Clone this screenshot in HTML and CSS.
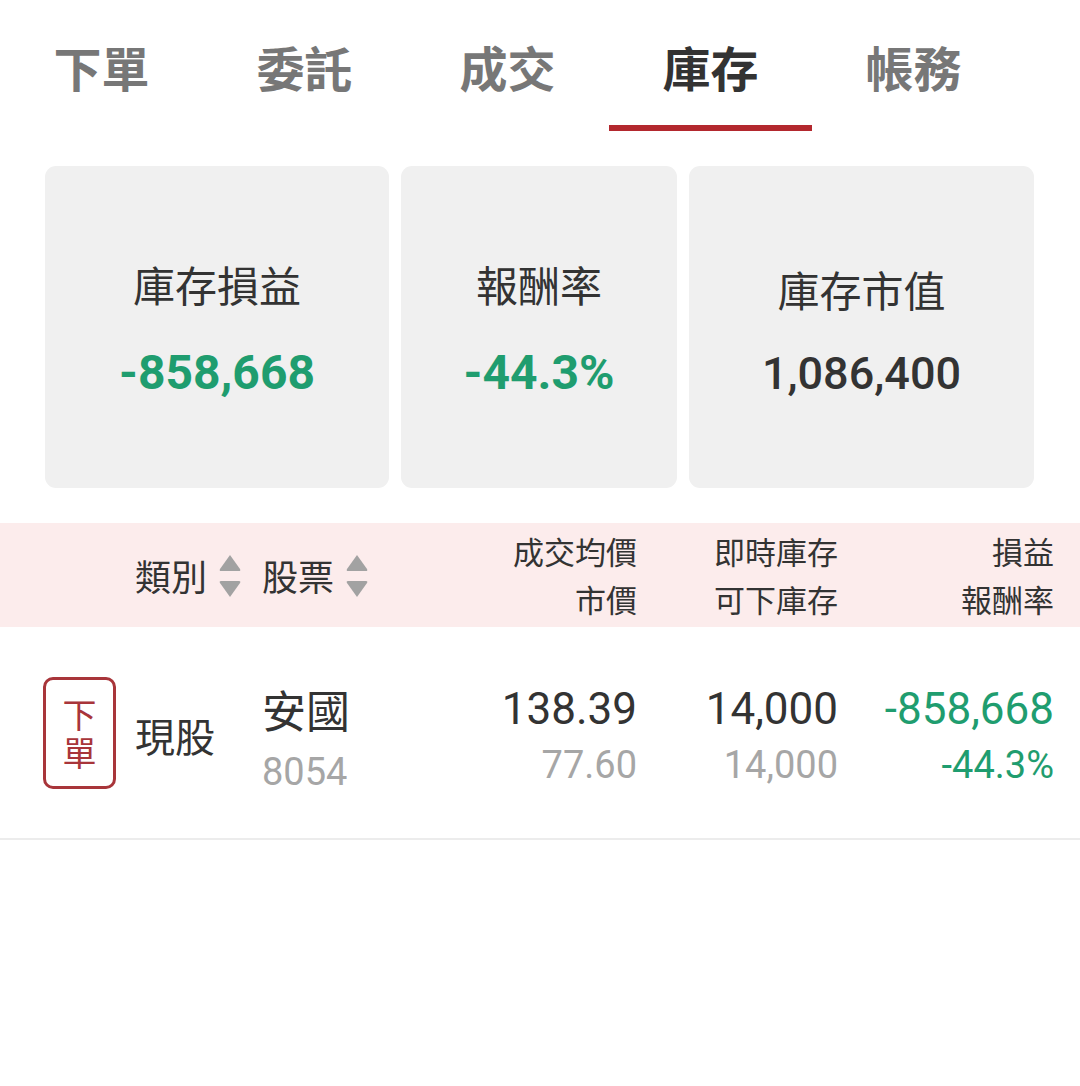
FILE: index.html
```html
<!DOCTYPE html>
<html lang="zh-Hant">
<head>
<meta charset="utf-8">
<title>庫存</title>
<link rel="stylesheet" href="styles.css">
</head>
<body>
<nav class="tabs">
  <div class="tab">下單</div>
  <div class="tab">委託</div>
  <div class="tab">成交</div>
  <div class="tab tab--active">庫存</div>
  <div class="tab">帳務</div>
</nav>

<section class="cards">
  <div class="card">
    <div class="card-label">庫存損益</div>
    <div class="card-value card-value--down">-858,668</div>
  </div>
  <div class="card">
    <div class="card-label">報酬率</div>
    <div class="card-value card-value--down">-44.3%</div>
  </div>
  <div class="card card--plain">
    <div class="card-label">庫存市值</div>
    <div class="card-value">1,086,400</div>
  </div>
</section>

<section class="table">
  <div class="thead">
    <div class="th th--empty"></div>
    <div class="th th--sort">
      <span class="sort-label">類別</span>
      <svg class="sort-icon" viewBox="0 0 24 46" width="24" height="46" aria-hidden="true">
        <path d="M12 2 L22 16 Q23 18 21 18 L3 18 Q1 18 2 16 Z" fill="#a2a2a2"/>
        <path d="M12 44 L22 30 Q23 28 21 28 L3 28 Q1 28 2 30 Z" fill="#a2a2a2"/>
      </svg>
    </div>
    <div class="th th--sort">
      <span class="sort-label">股票</span>
      <svg class="sort-icon" viewBox="0 0 24 46" width="24" height="46" aria-hidden="true">
        <path d="M12 2 L22 16 Q23 18 21 18 L3 18 Q1 18 2 16 Z" fill="#a2a2a2"/>
        <path d="M12 44 L22 30 Q23 28 21 28 L3 28 Q1 28 2 30 Z" fill="#a2a2a2"/>
      </svg>
    </div>
    <div class="th th--num"><div>成交均價</div><div>市價</div></div>
    <div class="th th--num"><div>即時庫存</div><div>可下庫存</div></div>
    <div class="th th--num"><div>損益</div><div>報酬率</div></div>
  </div>

  <div class="row">
    <div class="cell cell--badge">
      <div class="badge"><span class="badge-text">下單</span></div>
    </div>
    <div class="cell cell--type">現股</div>
    <div class="cell cell--stock">
      <div class="stock-name">安國</div>
      <div class="stock-code">8054</div>
    </div>
    <div class="cell cell--num">
      <div class="num-main">138.39</div>
      <div class="num-sub">77.60</div>
    </div>
    <div class="cell cell--num">
      <div class="num-main">14,000</div>
      <div class="num-sub">14,000</div>
    </div>
    <div class="cell cell--num cell--down">
      <div class="num-main">-858,668</div>
      <div class="num-sub">-44.3%</div>
    </div>
  </div>
</section>
</body>
</html>
```

FILE: styles.css
```css
* {
  box-sizing: border-box;
}

html, body {
  margin: 0;
  padding: 0;
  background: #ffffff;
}

body {
  font-family: "Noto Sans CJK TC", "Noto Sans", Roboto, sans-serif;
  color: #333333;
  width: 1080px;
}

/* ---------- Tabs ---------- */
.tabs {
  display: flex;
  height: 131px;
}

.tab {
  flex: 0 0 203px;
  height: 131px;
  padding-top: 36px;
  text-align: center;
  font-size: 48px;
  line-height: 60px;
  font-weight: 700;
  color: #777777;
}

.tab--active {
  color: #333333;
  border-bottom: 6px solid #b3282e;
}

/* ---------- Summary cards ---------- */
.cards {
  display: grid;
  grid-template-columns: 344px 276px 345px;
  column-gap: 12px;
  padding: 35px 0 0 45px;
}

.card {
  height: 322px;
  background: #f0f0f0;
  border-radius: 11px;
  padding-top: 93px;
  display: flex;
  flex-direction: column;
  align-items: center;
}

.card-label {
  font-size: 42px;
  line-height: 50px;
  color: #333333;
}

.card-value {
  margin-top: 37px;
  font-family: Roboto, "Noto Sans", sans-serif;
  font-size: 45px;
  line-height: 56px;
  font-weight: 500;
  color: #333333;
}

.card-value--down {
  font-size: 48px;
  font-weight: 700;
  color: #1f9d6f;
  margin-top: 36px;
}

.card--plain {
  padding-top: 98px;
}

.card--plain .card-value {
  margin-top: 32px;
}

/* ---------- Table ---------- */
.table {
  margin-top: 35px;
}

.thead,
.row {
  display: grid;
  grid-template-columns: 92px 127px 175px 200px 201px 216px;
  padding-left: 43px;
}

.thead {
  height: 104px;
  background: #fcecec;
  align-items: center;
}

.th--sort {
  display: flex;
  align-items: center;
  gap: 11px;
}

.sort-label {
  font-size: 36px;
  line-height: 48px;
  color: #333333;
}

.sort-icon {
  display: block;
  margin-top: 2px;
}

.th--num {
  text-align: right;
  font-size: 31px;
  line-height: 48px;
  color: #333333;
}

.row {
  min-height: 213px;
  align-items: center;
  border-bottom: 2px solid #ececec;
}

.badge {
  width: 73px;
  height: 112px;
  border: 3px solid #a8353a;
  border-radius: 10px;
  display: flex;
  align-items: center;
  justify-content: center;
}

.badge-text {
  display: block;
  width: 36px;
  text-align: center;
  color: #a8353a;
  font-size: 34px;
  line-height: 38px;
  word-break: break-all;
}

.cell--type {
  font-size: 40px;
  line-height: 50px;
  padding-top: 5px;
}

.cell--stock {
  padding-top: 11px;
}

.stock-name {
  font-size: 44px;
  line-height: 52px;
  color: #333333;
}

.stock-code {
  margin-top: 15px;
  font-family: Roboto, "Noto Sans", sans-serif;
  font-size: 38px;
  line-height: 44px;
  color: #a6a6a6;
}

.cell--num {
  text-align: right;
  font-family: Roboto, "Noto Sans", sans-serif;
  padding-top: 4px;
}

.num-main {
  font-size: 44px;
  line-height: 52px;
  color: #333333;
}

.num-sub {
  margin-top: 8px;
  font-size: 38px;
  line-height: 44px;
  color: #a6a6a6;
}

.cell--down .num-main,
.cell--down .num-sub {
  color: #1f9d6f;
}
```
